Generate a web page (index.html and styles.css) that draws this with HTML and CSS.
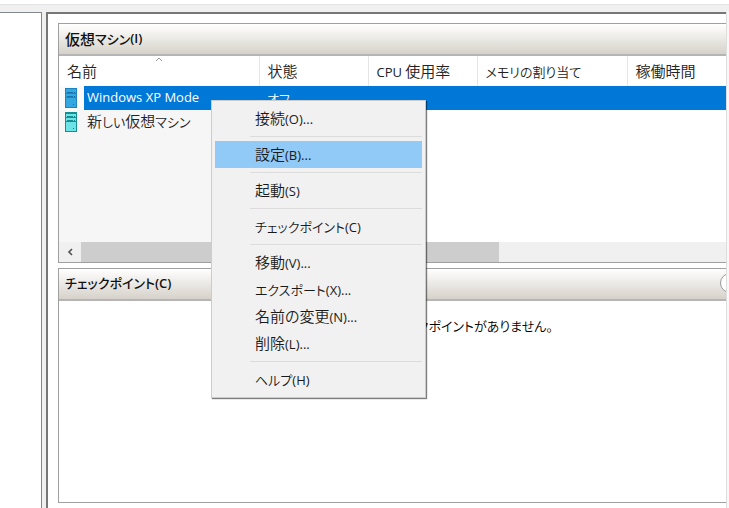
FILE: index.html
```html
<!DOCTYPE html>
<html lang="ja">
<head>
    <meta charset="UTF-8">
    <meta name="viewport" content="width=device-width, initial-scale=1.0">
    <title>Hyper-V マネージャー</title>
    <link rel="stylesheet" href="styles.css">
</head>
<body>
    <div class="toolbar"></div>
    <div class="workspace">
        <nav class="tree"></nav>
        <main class="main">
            <section class="panel">
                <h2 class="panel-title">仮想<span class="kana">マシン</span><span class="latin">(I)</span></h2>
                <div class="list">
                    <table class="vm-table">
                        <colgroup>
                            <col class="col-name">
                            <col class="col-state">
                            <col class="col-cpu">
                            <col class="col-memory">
                            <col>
                        </colgroup>
                        <thead>
                            <tr>
                                <th>名前
                                    <svg class="sort" width="8" height="5" viewBox="0 0 8 5"><path d="M1 4l3-3 3 3" fill="none" stroke="#999"/></svg>
                                </th>
                                <th>状態</th>
                                <th><span class="latin">CPU</span> 使用率</th>
                                <th><span class="kana">メモリの割り当て</span></th>
                                <th>稼働時間</th>
                            </tr>
                        </thead>
                        <tbody>
                            <tr class="selected">
                                <td>
                                    <div class="vm">
                                        <svg class="vm-icon" width="12" height="20" viewBox="0 0 12 20">
                                            <path d="M0 0h12v20H0z" fill="#1a83c0"/>
                                            <path d="M1 1h10v4H1zM1 6h10v3H1zM1 10h10v9H1z" fill="#35a7e0"/>
                                            <path d="M2 4.5h6M2 8.5h6" stroke="#1672ab"/>
                                            <path d="M9 4h1v1H9zM9 8h1v1H9zM8 16h1v1H8z" fill="#14679b"/>
                                        </svg>
                                        <span class="vm-name latin">Windows XP Mode</span>
                                    </div>
                                </td>
                                <td><span class="kana">オフ</span></td>
                                <td></td>
                                <td></td>
                                <td></td>
                            </tr>
                            <tr>
                                <td>
                                    <div class="vm">
                                        <svg class="vm-icon" width="12" height="20" viewBox="0 0 12 20">
                                            <path d="M0 0h12v20H0z" fill="#148f93"/>
                                            <path d="M1 2h10v3H1zM1 6h10v3H1zM1 10h10v9H1z" fill="#6ce3e6"/>
                                            <path d="M2 4.5h6M2 8.5h6" stroke="#178b8f"/>
                                            <path d="M9 4h1v1H9zM9 8h1v1H9zM8 16h1v1H8z" fill="#127e83"/>
                                        </svg>
                                        <span class="vm-name">新<span class="kana">しい</span>仮想<span class="kana">マシン</span></span>
                                    </div>
                                </td>
                                <td></td>
                                <td></td>
                                <td></td>
                                <td></td>
                            </tr>
                        </tbody>
                    </table>
                    <div class="list-space"></div>
                </div>
                <div class="scrollbar">
                    <button class="scroll-left" type="button" aria-label="左へスクロール">
                        <svg width="6" height="8" viewBox="0 0 6 8"><path d="M5 1L2 4l3 3" fill="none" stroke="#505050" stroke-width="1.6"/></svg>
                    </button>
                    <div class="thumb"></div>
                </div>
            </section>
            <section class="panel">
                <h2 class="panel-title"><span class="kana">チェックポイント</span><span class="latin">(C)</span>
                    <button class="collapse" type="button" aria-label="折りたたむ"></button>
                </h2>
                <p class="message">チェックポイントがありません。</p>
            </section>
        </main>
        <div class="edge"></div>
    </div>

    <div class="menu" role="menu">
        <button role="menuitem">接続<span class="latin">(O)...</span></button>
        <hr>
        <button role="menuitem" class="active">設定<span class="latin">(B)...</span></button>
        <hr>
        <button role="menuitem">起動<span class="latin">(S)</span></button>
        <hr>
        <button role="menuitem"><span class="kana">チェックポイント</span><span class="latin">(C)</span></button>
        <hr>
        <button role="menuitem">移動<span class="latin">(V)...</span></button>
        <button role="menuitem"><span class="kana">エクスポート</span><span class="latin">(X)...</span></button>
        <button role="menuitem">名前の変更<span class="latin">(N)...</span></button>
        <button role="menuitem">削除<span class="latin">(L)...</span></button>
        <hr>
        <button role="menuitem"><span class="kana">ヘルプ</span><span class="latin">(H)</span></button>
    </div>
</body>
</html>
```

FILE: styles.css
```css
* {
    box-sizing: border-box;
}
body {
    margin: 0;
    height: 100vh;
    display: flex;
    flex-direction: column;
    overflow: hidden;
    background: #f0f0f0;
    color: #222;
    font-family: "Noto Sans CJK JP", sans-serif;
    font-size: 15px;
    font-weight: 350;
    font-feature-settings: "palt";
}
.latin {
    font-family: "Open Sans", "Noto Sans CJK JP", sans-serif;
    font-size: 13px;
    font-weight: 400;
}
.kana {
    font-size: 13px;
}
.toolbar {
    height: 12px;
    flex: none;
    border-top: 4px solid #fff;
    box-shadow: inset 0 1px #e3e3e3;
}
.workspace {
    flex: 1;
    display: flex;
    min-height: 0;
}
.tree {
    width: 42px;
    margin-right: 4px;
    background: #fff;
    border-top: 1px solid #828790;
    border-right: 1px solid #828790;
}
.main {
    flex: 1;
    min-width: 0;
    display: grid;
    grid-template-rows: 239fr 235fr;
    gap: 5px;
    padding: 9px 0 5px 10px;
    background: #fff;
    border-top: 2px solid #777;
    border-left: 2px solid #777;
}
.edge {
    width: 3px;
    background: #f8f8f8;
    border-left: 1px solid #ddd;
}

/* panels */
.panel {
    display: flex;
    flex-direction: column;
    min-width: 0;
    min-height: 0;
    border: 1px solid #a0a0a0;
    border-right: none;
}
.panel-title {
    display: flex;
    align-items: center;
    flex: none;
    height: 32px;
    margin: 0;
    padding: 0 0 2px 6px;
    overflow: hidden;
    background: linear-gradient(#fff, #d6d2ca);
    border-bottom: 2px solid #b5b5b5;
    color: #111;
    font-size: 15px;
    font-weight: 500;
}
.panel-title .latin {
    font-weight: 600;
}
.collapse {
    flex: none;
    width: 20px;
    height: 20px;
    margin-left: auto;
    margin-right: -14px;
    padding: 0;
    border: 1px solid #999;
    border-radius: 50%;
    background: #fff;
}
.message {
    margin: 0;
    padding: 14px 0 0 325px;
    color: #000;
    font-size: 13px;
    line-height: 22px;
}

/* virtual machine list */
.list {
    flex: 1;
    min-height: 0;
    display: flex;
    flex-direction: column;
}
.vm-table {
    width: 100%;
    table-layout: fixed;
    border-collapse: collapse;
}
.col-name {
    width: 200px;
}
.col-state,
.col-cpu {
    width: 109px;
}
.col-memory {
    width: 150px;
}
.vm-table th {
    position: relative;
    height: 30px;
    padding: 0 0 0 8px;
    border-right: 1px solid #e5e5e5;
    font-weight: 350;
    line-height: 28px;
    text-align: left;
    white-space: nowrap;
}
.vm-table th:last-child {
    border-right: none;
}
.sort {
    position: absolute;
    top: 1px;
    left: 48%;
}
.vm-table td {
    height: 24px;
    padding: 0 0 0 8px;
    line-height: 22px;
    white-space: nowrap;
}
.vm-table td:first-child {
    padding: 0;
    background: #f6f6f6;
}
.vm {
    display: flex;
    align-items: center;
    height: 24px;
    padding-left: 6px;
}
.vm-name {
    flex: 1;
    height: 24px;
    margin-left: 7px;
    padding-left: 3px;
}
.selected td,
.selected .vm-name {
    background: #0078d7;
    color: #fff;
}
.vm-table .selected td:first-child {
    background: #fafafa;
}
.list-space {
    flex: 1;
    width: 201px;
    background: #f6f6f6;
}
.scrollbar {
    flex: none;
    display: flex;
    height: 20px;
    background: #f0f0f0;
}
.scroll-left {
    width: 22px;
    padding: 0;
    border: none;
    background: #f0f0f0;
}
.thumb {
    width: 418px;
    background: #cdcdcd;
}

/* context menu */
.menu {
    position: absolute;
    top: 100px;
    left: 211px;
    width: 215px;
    padding: 4px 3px 4px 3px;
    background: #f1f1f1;
    border: 1px solid #ccc;
    box-shadow: 1px 1px 1px rgba(0, 0, 0, 0.5);
}
.menu button {
    display: block;
    width: 100%;
    height: 27px;
    padding: 0 0 0 40px;
    border: none;
    background: none;
    color: #1a1a1a;
    font: inherit;
    font-feature-settings: inherit;
    line-height: 26px;
    text-align: left;
    white-space: nowrap;
}
.menu .active {
    background: #91c9f7;
}
.menu hr {
    height: 1px;
    margin: 4px 0 4px 35px;
    border: none;
    background: #dcdcdc;
}
```
